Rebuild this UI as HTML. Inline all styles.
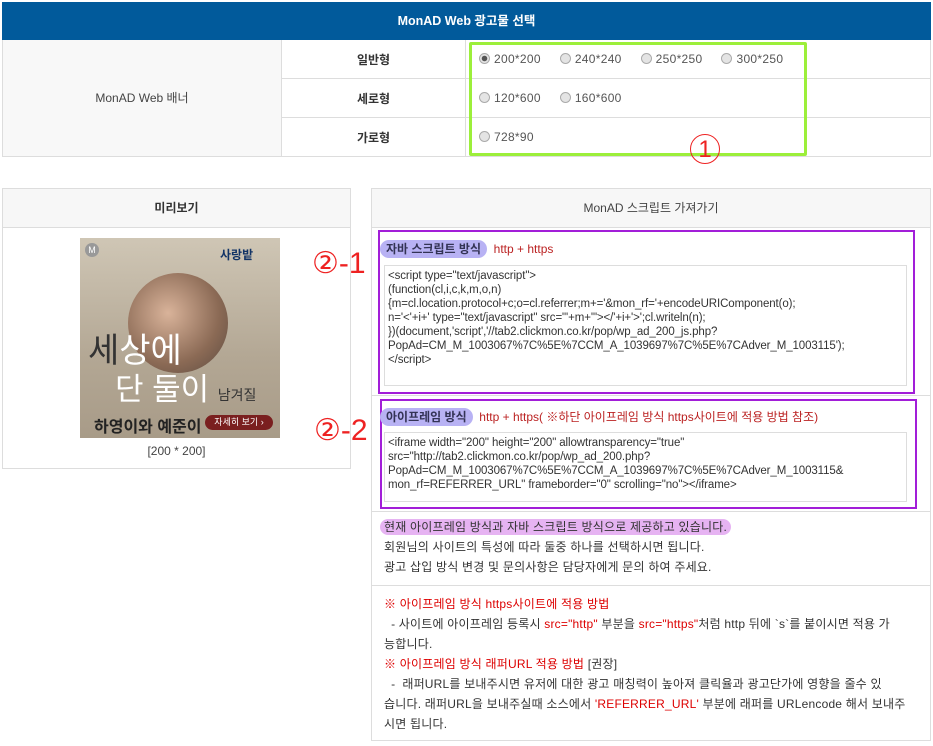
<!DOCTYPE html>
<html><head><meta charset="utf-8"><style>
*{margin:0;padding:0;box-sizing:border-box}
body{width:933px;height:746px;background:#fff;font-family:"Liberation Sans","Noto Sans CJK KR",sans-serif;font-size:12px;color:#333;position:relative;overflow:hidden}
.a{position:absolute}
.hdr{left:2px;top:2px;width:929px;height:38px;background:#015a9b;color:#fff;font-weight:bold;text-align:center;line-height:38px;font-size:12.5px}
.cell{position:absolute;border-bottom:1px solid #ddd;display:flex;align-items:center}
.rad{display:inline-block;width:11px;height:11px;border-radius:50%;border:1px solid #aaa;background:#e4e4e4;vertical-align:-1px;margin-right:4px}
.rad.on{background:radial-gradient(circle,#555 0 2.5px,#e4e4e4 3px)}
.opt{margin-right:19px;color:#555;letter-spacing:0.3px}
.box{border:1px solid #ddd}
.gh{background:#f7f7f7;border-bottom:1px solid #ddd;text-align:center;line-height:38px;font-weight:bold}
.ta{position:absolute;border:1px solid #ddd;background:#fff;font-size:11.5px;line-height:14px;padding:3px 3px;color:#333;white-space:pre;overflow:hidden;letter-spacing:-0.1px}
.red{color:#d00}
.dr{color:#b22}
.num{color:#e22;font-size:30px;font-family:"Liberation Sans",sans-serif}
.hl{background:#b8b2f4;border-radius:10px;padding:2px 6px;font-weight:bold;color:#335}
.txt{line-height:20px;letter-spacing:0.2px}
</style></head><body>
<div class="a hdr">MonAD Web 광고물 선택</div>
<div class="a" style="left:2px;top:40px;width:279px;height:117px;background:#f8f8f8;border-bottom:1px solid #ddd;border-left:1px solid #ddd;text-align:center;line-height:117px;color:#444">MonAD Web 배너</div>
<div class="a" style="left:281px;top:40px;width:1px;height:117px;background:#ddd"></div>
<div class="a" style="left:465px;top:40px;width:1px;height:117px;background:#ddd"></div>
<div class="a" style="left:930px;top:40px;width:1px;height:117px;background:#ddd"></div>
<div class="cell" style="left:282px;top:40px;width:183px;height:39px;justify-content:center;font-weight:bold">일반형</div>
<div class="cell" style="left:282px;top:79px;width:183px;height:39px;justify-content:center;font-weight:bold">세로형</div>
<div class="cell" style="left:282px;top:118px;width:183px;height:39px;justify-content:center;font-weight:bold">가로형</div>
<div class="cell" style="left:466px;top:40px;width:464px;height:39px;padding-left:13px"><span class="opt"><i class="rad on"></i>200*200</span><span class="opt"><i class="rad"></i>240*240</span><span class="opt"><i class="rad"></i>250*250</span><span class="opt"><i class="rad"></i>300*250</span></div>
<div class="cell" style="left:466px;top:79px;width:464px;height:39px;padding-left:13px"><span class="opt"><i class="rad"></i>120*600</span><span class="opt"><i class="rad"></i>160*600</span></div>
<div class="cell" style="left:466px;top:118px;width:464px;height:39px;padding-left:13px"><span class="opt"><i class="rad"></i>728*90</span></div>
<div class="a" style="left:469px;top:42px;width:338px;height:114px;border:3px solid #9cef3a;border-radius:2px"></div>
<div class="a" style="left:690px;top:134px;width:30px;height:30px;border:1px solid #e22;border-radius:50%;color:#e22;font-size:24px;text-align:center;line-height:29px">1</div>

<div class="a box" style="left:2px;top:188px;width:349px;height:281px">
<div class="gh">미리보기</div>
<div class="a" style="left:77px;top:49px;width:200px;height:200px;background:linear-gradient(#cfc6b5,#b3a794 60%,#a89b88);overflow:hidden">
<div class="a" style="left:48px;top:35px;width:100px;height:100px;border-radius:50%;background:radial-gradient(circle at 40% 40%,#d9b39a,#8b6a55 60%,#5a4a40)"></div>
<div class="a" style="left:5px;top:5px;width:14px;height:14px;border-radius:50%;background:#999;color:#fff;font-size:9px;text-align:center;line-height:14px">M</div>
<div class="a" style="left:140px;top:8px;font-size:12px;font-weight:bold;color:#136">사랑밭</div>
<div class="a" style="left:8px;top:85px;font-size:34px;color:#333">세<span style="color:#fff">상에</span></div>
<div class="a" style="left:35px;top:126px;font-size:31px;color:#fff">단 둘이 <span style="font-size:14px;color:#333">남겨질</span></div>
<div class="a" style="left:14px;top:175px;font-size:16px;color:#222;font-weight:bold">하영이와 예준이</div>
<div class="a" style="left:125px;top:177px;width:68px;height:15px;border-radius:8px;background:#7a1f1f;color:#fff;font-size:9px;text-align:center;line-height:15px">자세히 보기 ›</div>
</div>
<div class="a" style="left:0;width:347px;top:255px;text-align:center;color:#444">[200 * 200]</div>
</div>

<div class="a box" style="left:371px;top:188px;width:560px;height:553px">
<div class="gh" style="font-weight:normal;color:#444">MonAD 스크립트 가져가기</div>
</div>
<div class="a" style="left:372px;top:395px;width:558px;height:1px;background:#ddd"></div>
<div class="a" style="left:372px;top:511px;width:558px;height:1px;background:#ddd"></div>
<div class="a" style="left:372px;top:585px;width:558px;height:1px;background:#ddd"></div>

<div class="a" style="left:378px;top:230px;width:537px;height:164px;border:2px solid #a21ed8"></div>
<div class="a" style="left:380px;top:399px;width:537px;height:110px;border:2px solid #a21ed8"></div>
<div class="a num" style="left:312px;top:246px">②-1</div>
<div class="a num" style="left:314px;top:413px">②-2</div>
<div class="a" style="left:380px;top:240px"><span class="hl">자바 스크립트 방식</span> <span class="dr">&nbsp;http + https</span></div>
<div class="ta" style="left:384px;top:265px;width:523px;height:121px">&lt;script type="text/javascript"&gt;
(function(cl,i,c,k,m,o,n)
{m=cl.location.protocol+c;o=cl.referrer;m+='&amp;mon_rf='+encodeURIComponent(o);
n='&lt;'+i+' type="text/javascript" src="'+m+'"&gt;&lt;/'+i+'&gt;';cl.writeln(n);
})(document,'script','//tab2.clickmon.co.kr/pop/wp_ad_200_js.php?
PopAd=CM_M_1003067%7C%5E%7CCM_A_1039697%7C%5E%7CAdver_M_1003115');
&lt;/script&gt;</div>
<div class="a" style="left:380px;top:408px"><span class="hl">아이프레임 방식</span> <span class="dr">&nbsp;http + https( ※하단 아이프레임 방식 https사이트에 적용 방법 참조)</span></div>
<div class="ta" style="left:384px;top:432px;width:523px;height:70px">&lt;iframe width="200" height="200" allowtransparency="true"
src="http://tab2.clickmon.co.kr/pop/wp_ad_200.php?
PopAd=CM_M_1003067%7C%5E%7CCM_A_1039697%7C%5E%7CAdver_M_1003115&amp;
mon_rf=REFERRER_URL" frameborder="0" scrolling="no"&gt;&lt;/iframe&gt;</div>

<div class="a txt" style="left:380px;top:517px;color:#333">
<span style="background:#e6b3f2;border-radius:8px;padding:1px 4px 1px 4px">현재 아이프레임 방식과 자바 스크립트 방식으로 제공하고 있습니다.</span><br>
<span style="padding-left:4px">회원님의 사이트의 특성에 따라 둘중 하나를 선택하시면 됩니다.</span><br>
<span style="padding-left:4px">광고 삽입 방식 변경 및 문의사항은 담당자에게 문의 하여 주세요.</span></div>

<div class="a txt" style="left:384px;top:594px;width:530px">
<span class="red">※ 아이프레임 방식 https사이트에 적용 방법</span><br>
&nbsp; - 사이트에 아이프레임 등록시 <span class="red">src="http"</span> 부분을 <span class="red">src="https"</span>처럼 http 뒤에 `s`를 붙이시면 적용 가<br>능합니다.<br>
<span class="red">※ 아이프레임 방식 래퍼URL 적용 방법</span> [권장]<br>
&nbsp; -&nbsp; 래퍼URL를 보내주시면 유저에 대한 광고 매칭력이 높아져 클릭율과 광고단가에 영향을 줄수 있<br>습니다. 래퍼URL을 보내주실때 소스에서 <span class="red">'REFERRER_URL'</span> 부분에 래퍼를 URLencode 해서 보내주<br>시면 됩니다.</div>
</body></html>
